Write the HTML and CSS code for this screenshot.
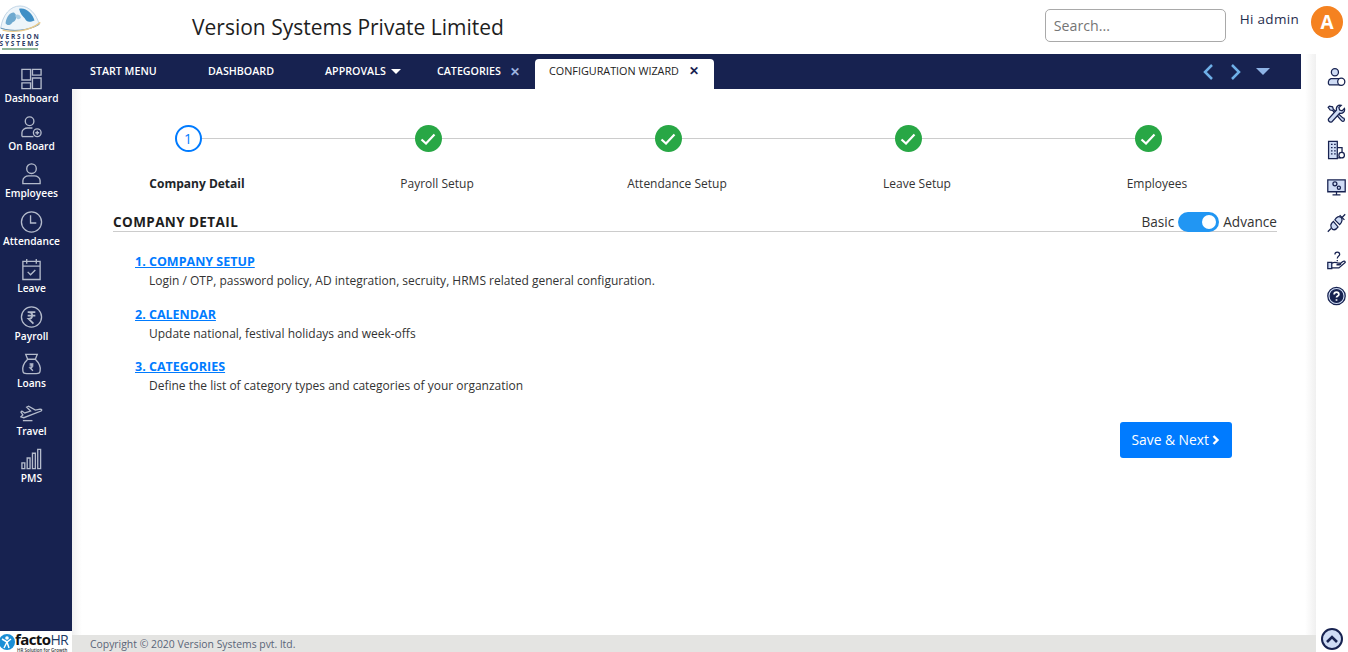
FILE: index.html
```html
<!DOCTYPE html>
<html lang="en">

<head>
    <meta charset="UTF-8">
    <meta name="viewport" content="width=device-width, initial-scale=1.0">
    <title>Configuration Wizard</title>
    <link rel="stylesheet" href="styles.css">
</head>

<body>
    <header class="topbar">
        <div class="logo">
            <svg class="logo-globe" width="41" height="28" viewBox="0 0 41 29">
                <path d="M0 24 C2 10 10 1 20 1 C30 1 37 10 40 20 C28 27 12 28 0 24 Z" fill="#eef5fa" stroke="#a9c4dc" stroke-width="0.7"/>
                <path d="M5 19 C6 11 11 7 14 8 C18 11 16 17 12 18 C10 21 7 22 5 19 Z" fill="#6fa9cf"/>
                <path d="M19 4 C26 2 33 9 35 16 C30 18 27 18 25 14 C23 12 20 9 19 4 Z" fill="#3f8fc6"/>
                <path d="M15 11 C17 9 20 10 21 13 C19 16 16 15 15 11 Z" fill="#a9cde4"/>
                <path d="M0 24 C12 28 28 27 40 20" fill="none" stroke="#5f8fb4" stroke-width="1"/>
                <path d="M2 26 C14 29 30 27 41 18" fill="none" stroke="#e8c98a" stroke-width="1.4"/>
            </svg>
            <div class="logo-text">VERSION</div>
            <div class="logo-text">SYSTEMS</div>
            <div class="logo-line"></div>
        </div>
        <div class="company">Version Systems Private Limited</div>
        <input class="search" type="text" placeholder="Search...">
        <div class="greeting">Hi admin</div>
        <div class="avatar">A</div>
    </header>

    <div class="page">
        <aside class="sidebar">
            <nav class="side-menu">
                <a class="side-item">
                    <svg viewBox="0 0 24 24"><path d="M2 2h9v11H2zM13 2h9v6h-9zM13 11h9v11h-9zM2 16h9v6H2z"/></svg>
                    <span>Dashboard</span>
                </a>
                <a class="side-item">
                    <svg viewBox="0 0 24 24"><circle cx="10" cy="6" r="4.5"/><path d="M2 22v-4c0-3 3-5 6-5h5"/><path d="M2 22h12"/><circle cx="18" cy="18" r="4"/><path d="M16 18h4M18 16v4"/></svg>
                    <span>On Board</span>
                </a>
                <a class="side-item">
                    <svg viewBox="0 0 24 24"><circle cx="12" cy="6.5" r="5"/><path d="M3 22v-3c0-3 3-5 6-5h6c3 0 6 2 6 5v3z"/></svg>
                    <span>Employees</span>
                </a>
                <a class="side-item">
                    <svg viewBox="0 0 24 24"><circle cx="12" cy="12" r="10.5"/><path d="M11 5v8h6"/></svg>
                    <span>Attendance</span>
                </a>
                <a class="side-item">
                    <svg viewBox="0 0 24 24"><path d="M3 4h18v19H3zM3 9h18M7 1.5v5M17 1.5v5M8 15l3 3 5-5"/></svg>
                    <span>Leave</span>
                </a>
                <a class="side-item">
                    <svg viewBox="0 0 24 24"><circle cx="12" cy="12" r="10.5"/><path d="M8 7h8M8 10.5h8M9 7c5 0 5 7 0 7l5 5" stroke-width="1.8"/></svg>
                    <span>Payroll</span>
                </a>
                <a class="side-item">
                    <svg viewBox="0 0 24 24"><path d="M8 7 6 2h12l-2 5M8 7h8M8 7c-3 3-6 7-5 12 0 2 2 3 4 3h10c2 0 4-1 4-3 1-5-2-9-5-12"/><path d="M10 12h4M10 14h4M10.5 12c3 0 3 4 0 4l3 3"/></svg>
                    <span>Loans</span>
                </a>
                <a class="side-item">
                    <svg viewBox="0 0 24 24"><path d="M1 17l3 1 18-7c1-1 1-2-1-2l-5 1-7-4-2 1 4 4-6 2-3-2-1 1 2 3z"/><path d="M3 21h10"/></svg>
                    <span>Travel</span>
                </a>
                <a class="side-item">
                    <svg viewBox="0 0 24 24"><path d="M2 16h3v6H2zM7.5 11h3v11h-3zM13 6h3v16h-3zM18.5 2h3v20h-3z"/></svg>
                    <span>PMS</span>
                </a>
            </nav>
            <div class="facto">
                <svg width="16" height="18" viewBox="0 0 16 16"><circle cx="8" cy="8" r="8" fill="#1b8fd6"/><circle cx="8" cy="4" r="1.8" fill="#fff"/><path d="M3 5l5 3 4-3M8 8l-3 6M8 8l2 6" stroke="#fff" stroke-width="1.5" fill="none"/></svg>
                <div class="facto-text">
                    <div class="facto-name">facto<b>HR</b></div>
                    <div class="facto-tag">HR Solution for Growth</div>
                </div>
            </div>
        </aside>

        <div class="center">
            <div class="workspace">
                <nav class="tabs">
                    <a class="tab tab-start">START MENU</a>
                    <a class="tab tab-dash">DASHBOARD</a>
                    <a class="tab tab-appr">APPROVALS <i class="caret"></i></a>
                    <a class="tab tab-cat">CATEGORIES <span class="close">✕</span></a>
                    <a class="tab tab-active">CONFIGURATION WIZARD <span class="close">✕</span></a>
                    <div class="tab-arrows">
                        <svg width="14" height="18" viewBox="0 0 14 18"><path d="M11 2 4 9l7 7" fill="none" stroke="#6fb0e8" stroke-width="2.5"/></svg>
                        <svg width="14" height="18" viewBox="0 0 14 18"><path d="M3 2l7 7-7 7" fill="none" stroke="#6fb0e8" stroke-width="2.5"/></svg>
                        <i class="caret caret-big"></i>
                    </div>
                </nav>

                <main class="content">
                    <div class="stepper">
                        <div class="step-line"></div>
                        <div class="step">
                            <div class="step-dot step-current">1</div>
                            <div class="step-label step-label-on">Company Detail</div>
                        </div>
                        <div class="step">
                            <div class="step-dot step-done"><svg width="16" height="12" viewBox="0 0 16 12"><path d="M1.5 6.5l4.5 4 8.5-9" fill="none" stroke="#fff" stroke-width="2.2"/></svg></div>
                            <div class="step-label">Payroll Setup</div>
                        </div>
                        <div class="step">
                            <div class="step-dot step-done"><svg width="16" height="12" viewBox="0 0 16 12"><path d="M1.5 6.5l4.5 4 8.5-9" fill="none" stroke="#fff" stroke-width="2.2"/></svg></div>
                            <div class="step-label">Attendance Setup</div>
                        </div>
                        <div class="step">
                            <div class="step-dot step-done"><svg width="16" height="12" viewBox="0 0 16 12"><path d="M1.5 6.5l4.5 4 8.5-9" fill="none" stroke="#fff" stroke-width="2.2"/></svg></div>
                            <div class="step-label">Leave Setup</div>
                        </div>
                        <div class="step">
                            <div class="step-dot step-done"><svg width="16" height="12" viewBox="0 0 16 12"><path d="M1.5 6.5l4.5 4 8.5-9" fill="none" stroke="#fff" stroke-width="2.2"/></svg></div>
                            <div class="step-label">Employees</div>
                        </div>
                    </div>

                    <div class="section-head">
                        <h2>COMPANY DETAIL</h2>
                        <div class="mode">
                            <span>Basic</span>
                            <div class="switch"><div class="knob"></div></div>
                            <span>Advance</span>
                        </div>
                    </div>

                    <div class="setup-list">
                        <div class="setup-item">
                            <a class="setup-link">1. COMPANY SETUP</a>
                            <p>Login / OTP, password policy, AD integration, secruity, HRMS related general configuration.</p>
                        </div>
                        <div class="setup-item">
                            <a class="setup-link">2. CALENDAR</a>
                            <p>Update national, festival holidays and week-offs</p>
                        </div>
                        <div class="setup-item">
                            <a class="setup-link">3. CATEGORIES</a>
                            <p>Define the list of category types and categories of your organzation</p>
                        </div>
                    </div>

                    <div class="actions">
                        <button class="save-btn">Save &amp; Next <svg width="8" height="10" viewBox="0 0 8 10"><path d="M1.5 1l4 4-4 4" fill="none" stroke="#fff" stroke-width="2.4"/></svg></button>
                    </div>
                </main>
            </div>
            <footer class="footer">Copyright © 2020 Version Systems pvt. ltd.</footer>
        </div>

        <aside class="tools">
            <div class="tool-list">
                <svg viewBox="0 0 24 24"><circle cx="10" cy="6" r="4.5" fill="#cfdcf5"/><path d="M3 22c-2-1-2-7 2-8h9c2 0 3 1 3 2v6z" fill="#cfdcf5"/><circle cx="18" cy="18" r="4.5" fill="#fff"/></svg>
                <svg viewBox="0 0 24 24"><path d="M3 2 1.5 3.5 4 7l3 .5L18 20c1 2 4 2 4-1 0-1-1-2-2-2L8 6 7 3z" fill="#cfdcf5"/><path d="M22 5l-3 3-3-1-1-3 3-3c-4-1-7 2-6 6L2 18c-1 2 1 5 4 4L16 11c4 1 7-2 6-6z" fill="#cfdcf5"/></svg>
                <svg viewBox="0 0 24 24"><path d="M2 1h11v22H2z" fill="#cfdcf5"/><path d="M13 9h6v6M13 22h4"/><path d="M5 5h2M9 5h2M5 9h2M9 9h2M5 13h2M9 13h2M5 17h2M9 17h2"/><circle cx="18.5" cy="18.5" r="3.5"/></svg>
                <svg viewBox="0 0 24 24"><path d="M1 3h22v15H1z" fill="#cfdcf5"/><path d="M12 18v4M7 22h10"/><circle cx="10" cy="8" r="2.5"/><circle cx="15" cy="13" r="2"/></svg>
                <svg viewBox="0 0 24 24"><path d="M1 23l4-4M23 1l-4 4M16 2l6 6M5 13l6 6"/><path d="M8 10C4 13 4 17 7 20c2 1 5 0 7-3zM10 8l6 6c3-3 4-6 2-9-3-2-6-1-8 3z" fill="#cfdcf5"/></svg>
                <svg viewBox="0 0 24 24"><path d="M1 15h5v8H1z" fill="#cfdcf5"/><path d="M6 16c4-2 6-1 8 0h3c1 1 0 2-1 2h-4M6 22h9l8-7c0-2-2-2-3-1l-4 3"/><path d="M10 5c0-4 6-4 6 0 0 2-3 2-3 5M13 12v1.5"/></svg>
                <svg viewBox="0 0 24 24"><circle cx="12" cy="12" r="11" fill="#cfdcf5"/><circle cx="12" cy="12" r="8" fill="#172250"/><path d="M9 10c0-4 6-4 6 0 0 2-3 2-3 4M12 16v2" stroke="#fff" stroke-width="2.2"/></svg>
            </div>
            <div class="to-top">
                <svg width="12" height="8" viewBox="0 0 12 8"><path d="M1 7l5-5 5 5" fill="none" stroke="#172250" stroke-width="2.6"/></svg>
            </div>
        </aside>
    </div>
</body>

</html>
```

FILE: styles.css
```css
* {
    margin: 0;
    padding: 0;
    box-sizing: border-box;
    font-family: "Open Sans", "Noto Sans", sans-serif;
}

html,
body {
    height: 652px;
    overflow: hidden;
}

body {
    background: #fff;
    color: #212529;
    display: flex;
    flex-direction: column;
}

/* top header */
.topbar {
    height: 54px;
    flex: none;
    display: flex;
    align-items: center;
}

.logo {
    width: 72px;
    height: 54px;
    padding-top: 5px;
    padding-right: 32px;
    display: flex;
    flex-direction: column;
    align-items: center;
}

.logo-globe {
    flex: none;
}

.logo-text {
    font-size: 6.5px;
    line-height: 7px;
    letter-spacing: 1.8px;
    font-weight: 700;
    color: #2c3b66;
    white-space: nowrap;
}

.logo-line {
    width: 36px;
    height: 2px;
    margin-top: 1px;
    background: #8fb79a;
}

.company {
    margin-left: 120px;
    margin-top: -1px;
    font-size: 21px;
    font-weight: 500;
    color: #1e1e1e;
    flex: 1;
}

.search {
    width: 181px;
    height: 33px;
    padding: 0 8px;
    border: 1px solid #a9a9a9;
    border-radius: 5px;
    font-size: 14.2px;
    outline: none;
    margin-top: -4px;
}

.search::placeholder {
    color: #757575;
}

.greeting {
    margin-left: 14px;
    margin-top: -16px;
    font-size: 13.5px;
    color: #1f2d4d;
    letter-spacing: 0.3px;
    white-space: nowrap;
}

.avatar {
    width: 32px;
    height: 32px;
    margin: -10px 5px 0 12px;
    border-radius: 50%;
    background: #f58220;
    color: #fff;
    font-size: 19px;
    font-weight: 700;
    display: flex;
    align-items: center;
    justify-content: center;
    flex: none;
}

.page {
    flex: 1;
    display: flex;
    min-height: 0;
}

/* left sidebar */
.sidebar {
    width: 72px;
    flex: none;
    background: #172250;
    display: flex;
    flex-direction: column;
}

.side-menu {
    flex: 1;
    padding-top: 13px;
    padding-right: 9px;
}

.side-item {
    height: 47.5px;
    display: flex;
    flex-direction: column;
    align-items: center;
    color: #fff;
    font-size: 10.2px;
    font-weight: 600;
    line-height: 14px;
    white-space: nowrap;
}

.side-item svg {
    width: 23px;
    height: 24px;
    flex: none;
    fill: none;
    stroke: #b4bbcb;
    stroke-width: 1.4;
}

.facto {
    height: 21px;
    background: #fff;
    display: flex;
    align-items: center;
}

.facto svg {
    flex: none;
    margin-left: -1px;
}

.facto-text {
    white-space: nowrap;
}

.facto-name {
    font-size: 15px;
    line-height: 16px;
    letter-spacing: -0.6px;
    font-weight: 700;
    color: #111;
}

.facto-name b {
    font-size: 14px;
    font-weight: 400;
    color: #1d3a66;
}

.facto-tag {
    font-size: 4.5px;
    line-height: 5px;
    font-weight: 600;
    color: #333;
    margin-left: 2px;
}

/* middle column */
.center {
    flex: 1;
    display: flex;
    flex-direction: column;
    min-width: 0;
    background: linear-gradient(to right, #f1f1f1, #fff 10px, #fff calc(100% - 11px), #f0f0f0);
}

.workspace {
    flex: 1;
    display: flex;
    flex-direction: column;
    min-height: 0;
}

.tabs {
    height: 35px;
    flex: none;
    margin-right: 15px;
    background: #172250;
    display: flex;
    align-items: flex-end;
    font-size: 10.7px;
    font-weight: 600;
    color: #fff;
}

.tab {
    height: 30px;
    display: flex;
    align-items: center;
    padding-bottom: 6px;
    white-space: nowrap;
}

.tab-start {
    margin-left: 18px;
    width: 118px;
}

.tab-dash {
    width: 117px;
}

.tab-appr {
    width: 112px;
    gap: 5px;
}

.tab-cat {
    width: 98px;
}

.tab-cat .close {
    margin-left: 9px;
    color: #9db4e0;
}

.tab-active {
    width: 179px;
    background: #fff;
    color: #222;
    font-size: 10.8px;
    font-weight: 400;
    padding-left: 14px;
    padding-bottom: 7px;
    border-radius: 4px 4px 0 0;
}

.tab-active .close {
    margin-left: 10px;
    color: #172250;
    font-weight: 700;
}

.close {
    font-size: 12px;
}

.caret {
    width: 0;
    height: 0;
    border-left: 5px solid transparent;
    border-right: 5px solid transparent;
    border-top: 5px solid #fff;
}

.tab-arrows {
    margin-left: auto;
    height: 35px;
    padding-right: 31px;
    display: flex;
    align-items: center;
    gap: 14px;
}

.caret-big {
    margin-left: -1px;
    border-left-width: 7.5px;
    border-right-width: 7.5px;
    border-top: 7px solid #8fb4e6;
}

.content {
    flex: 1;
    padding: 36px 39px 0 41px;
}

/* stepper */
.stepper {
    display: grid;
    grid-template-columns: repeat(5, 240px);
    margin-left: -36px;
    position: relative;
}

.step-line {
    position: absolute;
    left: 120px;
    width: 950px;
    top: 13px;
    height: 1px;
    background: #ccc;
}

.step {
    display: flex;
    flex-direction: column;
    align-items: center;
    position: relative;
}

.step-dot {
    width: 27px;
    height: 27px;
    margin-right: 18px;
    border-radius: 50%;
    display: flex;
    align-items: center;
    justify-content: center;
    font-size: 14px;
}

.step-current {
    background: #fff;
    border: 2px solid #007bff;
    color: #007bff;
}

.step-done {
    background: #28a745;
}

.step-label {
    margin-top: 23px;
    font-size: 12px;
    line-height: 17px;
    color: #333;
}

.step-label-on {
    font-weight: 700;
    color: #212529;
}

/* section heading */
.section-head {
    margin-top: 20px;
    height: 20px;
    display: flex;
    align-items: center;
    justify-content: space-between;
    border-bottom: 1px solid #ccc;
}

.section-head h2 {
    font-size: 13.5px;
    font-weight: 700;
    letter-spacing: 0.4px;
    color: #1e1e1e;
}

.mode {
    display: flex;
    align-items: center;
    gap: 4px;
    font-size: 13.6px;
    color: #333;
}

.switch {
    width: 41px;
    height: 20px;
    border-radius: 10px;
    background: #2196f3;
    display: flex;
    align-items: center;
    justify-content: flex-end;
    padding-right: 3px;
}

.knob {
    width: 14px;
    height: 14px;
    border-radius: 50%;
    background: #fff;
}

/* setup links */
.setup-list {
    padding: 21px 0 0 22px;
}

.setup-item {
    height: 52.5px;
}

.setup-link {
    display: block;
    font-size: 12.5px;
    line-height: 17px;
    font-weight: 700;
    color: #007bff;
    text-decoration: underline;
}

.setup-item p {
    margin-top: 2px;
    margin-left: 14px;
    font-size: 12px;
    line-height: 17px;
    color: #333;
}

.actions {
    margin-top: 11px;
    padding-right: 45px;
    display: flex;
    justify-content: flex-end;
}

.save-btn {
    width: 112px;
    height: 36px;
    border: none;
    border-radius: 3px;
    background: #007bff;
    color: #fff;
    font-size: 13.8px;
    cursor: pointer;
}

.footer {
    height: 17px;
    flex: none;
    padding-left: 18px;
    background: #e4e4e2;
    color: #5a6478;
    font-size: 10.4px;
    line-height: 18px;
}

/* right toolbar */
.tools {
    width: 32px;
    flex: none;
    background: #fff;
    display: flex;
    flex-direction: column;
    align-items: center;
    padding-left: 8px;
}

.tool-list {
    flex: 1;
    padding-top: 13px;
    display: flex;
    flex-direction: column;
    align-items: center;
    gap: 16.5px;
}

.tool-list svg {
    width: 19px;
    height: 20px;
    fill: none;
    stroke: #172250;
    stroke-width: 1.6;
}

.to-top {
    width: 22px;
    height: 22px;
    margin-left: -8px;
    margin-bottom: 2px;
    border-radius: 50%;
    border: 2px solid #172250;
    background: #cfdcf5;
    display: flex;
    align-items: center;
    justify-content: center;
}
```
